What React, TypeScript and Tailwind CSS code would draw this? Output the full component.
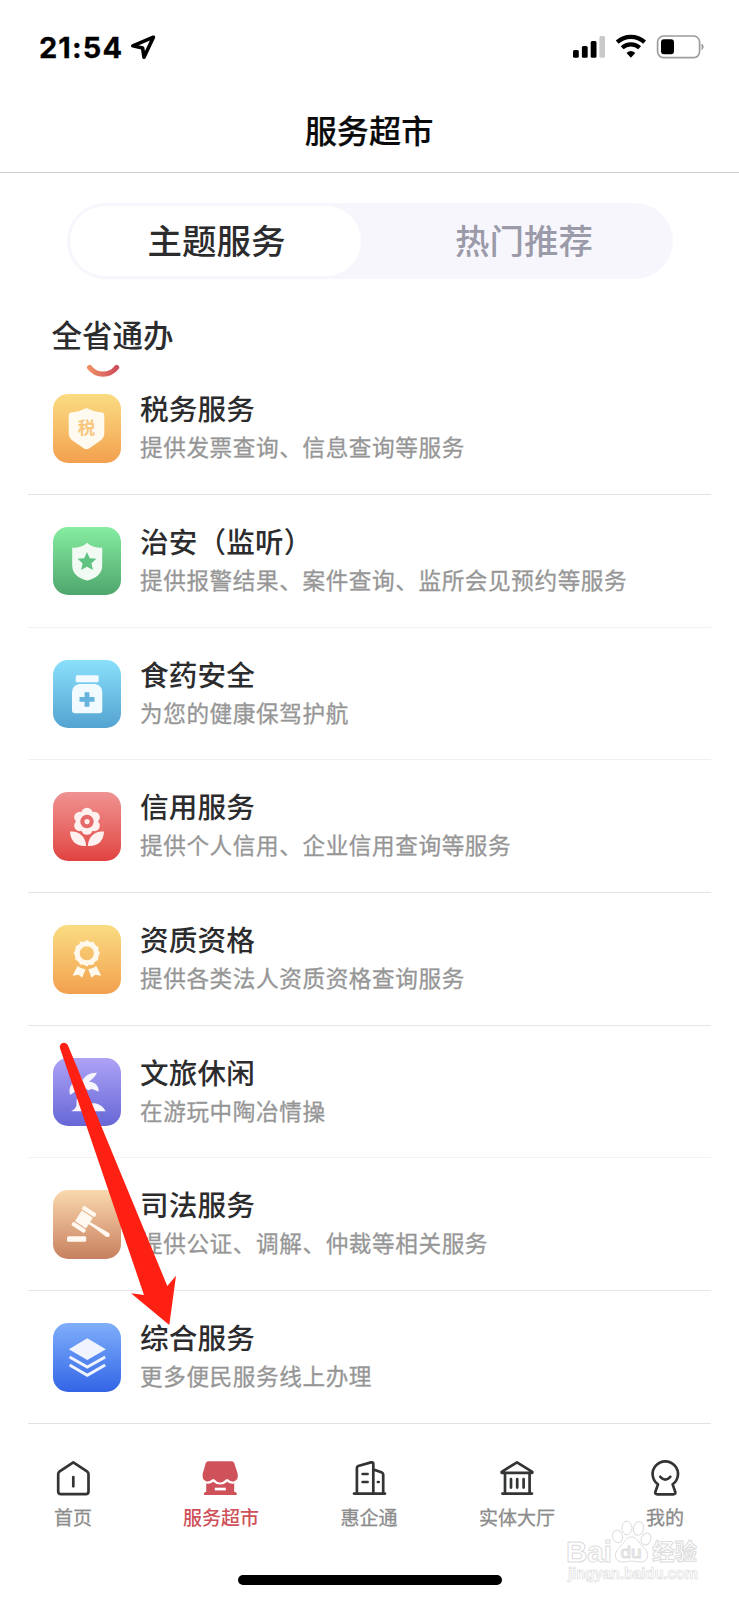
import type { ReactNode } from "react";

type Service = { title: string; desc: string; tile: string; line: string; icon: ReactNode };

const TaxIcon = () => (
  <svg viewBox="0 0 68 68" className="size-full">
    <path d="M33.5 13.7 Q42 17.8 49.3 18.2 Q51.3 18.6 51.3 21 V39 Q51.3 43.5 47.5 46.2 L36 54.2 Q33.5 55.8 31 54.2 L19.5 46.2 Q15.7 43.5 15.7 39 V21 Q15.7 18.6 17.7 18.2 Q25 17.8 33.5 13.7Z" fill="#fffaf0" />
    <text x="33.5" y="39.6" textAnchor="middle" fontSize="17.5" fontWeight="700" fill="#f8c67c" fontFamily="Noto Sans CJK SC, sans-serif">税</text>
  </svg>
);

const PoliceIcon = () => (
  <svg viewBox="0 0 68 68" className="size-full">
    <path d="M34.2 15.6 C31 19 25 21 19.2 20.2 V38 C19.2 47 26 51.5 34.2 53.2 C42.4 51.5 49.2 47 49.2 38 V20.2 C43.4 21 37.4 19 34.2 15.6Z" fill="#f1fbf4" />
    <path d="M34 24.8 L36.8 30.9 L43.4 31.6 L38.5 36.1 L39.9 42.7 L34 39.4 L28.1 42.7 L29.5 36.1 L24.6 31.6 L31.2 30.9Z" fill="#61c382" />
  </svg>
);

const MedicineIcon = () => (
  <svg viewBox="0 0 68 68" className="size-full">
    <rect x="22.7" y="15" width="23" height="7" rx="1.5" fill="#f1fafe" />
    <path d="M26 23.7 H42.3 Q49.3 25.5 49.3 32 V50 Q49.3 53 46.3 53 H22 Q19 53 19 50 V32 Q19 25.5 26 23.7Z" fill="#f1fafe" />
    <path d="M34 31.9 V46.5 M26.5 39.2 H41.5" stroke="#64b4dd" strokeWidth="4.8" fill="none" />
  </svg>
);

const FlowerIcon = () => (
  <svg viewBox="0 0 68 68" className="size-full">
    <g fill="#fff1f0">
      <circle cx="34" cy="29.3" r="11" />
      <circle cx="34" cy="21" r="5.6" />
      <circle cx="41.2" cy="25" r="5.6" />
      <circle cx="41.2" cy="33.4" r="5.6" />
      <circle cx="34" cy="37" r="5.6" />
      <circle cx="26.8" cy="33.4" r="5.6" />
      <circle cx="26.8" cy="25" r="5.6" />
      <path d="M17 39.3 C24 38.3 32.5 42.5 33.2 53.7 C23 54.3 17.5 49 17 39.3Z" />
      <path d="M51 39.3 C44 38.3 35.5 42.5 34.8 53.7 C45 54.3 50.5 49 51 39.3Z" />
    </g>
    <circle cx="34" cy="29.3" r="6.7" fill="#e66a69" />
    <circle cx="34" cy="29.3" r="2.6" fill="#fff1f0" />
  </svg>
);

const MedalIcon = () => (
  <svg viewBox="0 0 68 68" className="size-full">
    <g fill="none" stroke="#fff9ed">
      <circle cx="33.8" cy="28" r="9.6" strokeWidth="5" />
      <circle cx="33.8" cy="28" r="11.3" strokeWidth="3.4" strokeLinecap="round" strokeDasharray="0.1 5.816" />
    </g>
    <path d="M24.5 40.8 Q28 43.8 32.5 43.9 L29.2 52.4 L25.7 49.4 L19.6 50.6Z" fill="#fff9ed" />
    <path d="M43.3 40.8 Q39.8 43.8 35.3 43.9 L38.6 52.4 L42.1 49.4 L48.2 50.6Z" fill="#fff9ed" />
  </svg>
);

const PalmIcon = () => (
  <svg viewBox="0 0 68 68" className="size-full">
    <g fill="#f6f4fe">
      <path d="M18.3 53 Q22 51 23.4 48 C23.2 40 25 33 28.5 27 L34 27 C30.5 34 30.5 42 32.5 46.5 Q37 44.6 42 45 Q49.5 46.5 52.7 53Z" />
      <path d="M28 26 C30 18.5 36 14.2 43.9 14.6 C42.5 18.5 38.5 21.5 36 23.5 C41.5 23.5 46.2 27.5 45.6 33.2 C43 33 41.5 31 38.5 30.8 C37 31 36.5 32 35.5 32 C33.5 31 32.5 29.5 30 29.5Z" />
      <path d="M31 26 C30 19 25 15.8 18.5 17.5 C19 20 21.5 21.5 23 23 C18 25 15.5 30 17 36.4 C20 35.5 21.5 33 24.5 32 C27.5 31.5 30 29 31 26Z" />
    </g>
  </svg>
);

const GavelIcon = () => (
  <svg viewBox="0 0 68 68" className="size-full">
    <g fill="#fff8f1">
      <rect x="14" y="46" width="19.2" height="5.4" rx="1.5" />
      <g transform="translate(30.9 29.2) rotate(33)">
        <rect x="-7.8" y="-11.6" width="15.6" height="4.2" rx="1.6" />
        <rect x="-6.6" y="-6.3" width="13.2" height="12.6" rx="0.8" />
        <rect x="-7.8" y="7.4" width="15.6" height="4.2" rx="1.6" />
        <path d="M6 -1.3 L14 -1.5 L28 -2.4 Q30.5 -2 30.5 0 Q30.5 2 28 2.4 L14 1.5 L6 1.3Z" />
      </g>
    </g>
  </svg>
);

const LayersIcon = () => (
  <svg viewBox="0 0 68 68" className="size-full">
    <path d="M34.3 15 L52.9 25.9 L34.3 36.8 L15.9 25.9Z" fill="#eff4ff" />
    <path d="M16.6 33.8 L34.3 43.8 L52.2 33.8 M16.6 41.8 L34.3 52 L52.2 41.8" fill="none" stroke="#eff4ff" strokeWidth="2.9" />
  </svg>
);

const services: Service[] = [
  { title: "税务服务", desc: "提供发票查询、信息查询等服务", tile: "from-[#f9dc82] to-[#f2a04e]", line: "border-[#e2e2e2]", icon: <TaxIcon /> },
  { title: "治安（监听）", desc: "提供报警结果、案件查询、监所会见预约等服务", tile: "from-[#86eda1] to-[#4fa66d]", line: "border-[#f0f0f0]", icon: <PoliceIcon /> },
  { title: "食药安全", desc: "为您的健康保驾护航", tile: "from-[#8ae0fb] to-[#54a3d1]", line: "border-[#f0f0f0]", icon: <MedicineIcon /> },
  { title: "信用服务", desc: "提供个人信用、企业信用查询等服务", tile: "from-[#ef9292] to-[#e0413f]", line: "border-[#e2e2e2]", icon: <FlowerIcon /> },
  { title: "资质资格", desc: "提供各类法人资质资格查询服务", tile: "from-[#f9dc82] to-[#f2a04e]", line: "border-[#e6e6e6]", icon: <MedalIcon /> },
  { title: "文旅休闲", desc: "在游玩中陶冶情操", tile: "from-[#aea2f6] to-[#6767d6]", line: "border-[#f2f2f2]", icon: <PalmIcon /> },
  { title: "司法服务", desc: "提供公证、调解、仲裁等相关服务", tile: "from-[#f9d9ae] to-[#c7805f]", line: "border-[#e6e6e6]", icon: <GavelIcon /> },
  { title: "综合服务", desc: "更多便民服务线上办理", tile: "from-[#80aefa] to-[#3464e6]", line: "border-[#e2e2e2]", icon: <LayersIcon /> },
];

const navStroke = { fill: "none", stroke: "#333436", strokeWidth: 2.7, strokeLinecap: "round", strokeLinejoin: "round" } as const;

const tabs = [
  {
    label: "首页",
    icon: (
      <g {...navStroke}>
        <path d="M18.3 2.3 L32 11.3 Q33.5 12.4 33.5 14 V31.5 Q33.5 34.2 30.8 34.2 H5.9 Q3.2 34.2 3.2 31.5 V14 Q3.2 12.4 4.7 11.3Z" />
        <path d="M18.3 17 V26.3" />
      </g>
    ),
  },
  {
    label: "服务超市",
    active: true,
    icon: (
      <g fill="#cf515a">
        <path d="M5.4 1.2 H28.6 Q30.6 1.2 31.3 3.2 L34.6 13.5 Q36 19.8 30.8 21.4 Q27.8 22 25.6 19.8 Q24.3 18.4 23 19.6 Q20.5 22.4 17.2 22.4 Q13.9 22.4 11.4 19.6 Q10.1 18.4 8.8 19.8 Q6.6 22 3.6 21.4 Q-1.6 19.8 -0.2 13.5 L2.7 3.2 Q3.4 1.2 5.4 1.2Z" />
        <path d="M3.2 23.6 Q7.5 24.3 10.1 21.8 Q13 24.6 17.2 24.6 Q21.4 24.6 24.3 21.8 Q27 24.3 31.2 23.6 V32 H32.5 Q33.8 32.2 33.8 35 H0.9 Q0.9 32.2 2.2 32 H3.2Z" />
        <rect x="11.8" y="27.7" width="11" height="2.7" fill="#fff" />
      </g>
    ),
  },
  {
    label: "惠企通",
    icon: (
      <g {...navStroke}>
        <path d="M3 33.6 H34 M5.9 33.5 V7.8 Q5.9 6.5 7.2 6 L20 2.4 Q22.3 1.8 22.3 3.6 V33.5 M22.5 9.6 L31 12.6 Q32.2 13.2 32.2 14.5 V33.5 M11.6 14 H16.6 M11.6 22 H16.6 M26.9 22 H27.7" />
      </g>
    ),
  },
  {
    label: "实体大厅",
    icon: (
      <g {...navStroke}>
        <path d="M18 2.4 L33.3 11.8 V12.8 H2.7 V11.8Z M6 13 V33.4 M30.6 13 V33.4 M3.4 33.6 H33" />
        <path d="M12 19.2 V27.6 M18.2 19.2 V27.6 M24.6 19.2 V27.6" />
      </g>
    ),
  },
  {
    label: "我的",
    icon: (
      <g {...navStroke}>
        <path d="M11 24.4 A12.7 12.7 0 1 1 25.6 24.4 L28.3 32 Q28.8 34.3 26.3 34.3 H10.3 Q7.8 34.3 8.3 32Z" />
        <path d="M13.3 16.8 Q18.3 22.4 23.3 16.8" />
      </g>
    ),
  },
];

function StatusBar() {
  return (
    <div className="flex h-[94px] items-center justify-between pl-[39px] pr-[34px]">
      <div className="flex items-center gap-[8px]">
        <span className="w-[83px] whitespace-nowrap font-['Inter',sans-serif] text-[29px] font-bold leading-none tracking-[1.1px] text-black [-webkit-text-stroke:0.3px_#000]">21:54</span>
        <svg viewBox="0 0 26 26" className="size-[26px]">
          <path d="M23.4 3.2 L2.8 11.8 L12.6 13.9 L14 23.2Z" fill="none" stroke="#000" strokeWidth="3.6" strokeLinejoin="round" />
        </svg>
      </div>
      <svg viewBox="0 0 132 26" className="h-[26px] w-[132px]">
        <rect x="0" y="16" width="5.8" height="7.7" rx="1.5" />
        <rect x="8.9" y="12" width="5.8" height="11.7" rx="1.5" />
        <rect x="17.7" y="7" width="5.8" height="16.7" rx="1.5" />
        <rect x="26.4" y="2" width="5.6" height="21.7" rx="1.5" fill="#c9c9c9" />
        <g fill="none" stroke="#000" strokeWidth="4.2">
          <path d="M44.2 8.1 A20.5 20.5 0 0 1 71.6 8.1" />
          <path d="M49.2 13.8 A12.8 12.8 0 0 1 66.6 13.8" />
        </g>
        <path d="M57.9 23.8 L53.5 19 Q57.9 15.2 62.3 19Z" />
        <rect x="84.6" y="2" width="42" height="21.6" rx="6" fill="none" stroke="#9c9c9c" strokeWidth="1.7" />
        <rect x="88" y="5.3" width="13" height="15" rx="3" />
        <path d="M129 10 Q131.6 12.8 129 15.6Z" fill="#9c9c9c" stroke="#9c9c9c" />
      </svg>
    </div>
  );
}

function ServiceRow({ title, desc, tile, line, icon }: Service) {
  return (
    <li className={`flex h-[132.7px] border-b pl-[25px] pt-[32px] ${line}`}>
      <div className={`h-[68.5px] w-[68px] shrink-0 rounded-[15px] bg-linear-to-b ${tile}`}>{icon}</div>
      <div className="-mt-px ml-[19px] flex flex-col whitespace-nowrap">
        <h3 className="h-[34px] text-[28.6px] font-medium leading-[30px] tracking-[0.15px] text-[#2c2c2e]">{title}</h3>
        <p className="mt-[2px] text-[22.6px] leading-[36px] tracking-[0.61px] text-[#969696] [-webkit-text-stroke:0.3px_#969696]">{desc}</p>
      </div>
    </li>
  );
}

function Watermark() {
  return (
    <div className="absolute left-[560px] top-[1515px] h-[80px] w-[150px]">
      <svg viewBox="-6 -4 150 80" className="size-full overflow-visible" fontWeight="700" fill="#fff" stroke="#dcdcdc" strokeWidth="1">
        <text x="0" y="43" fontSize="30" textLength="46" lengthAdjust="spacingAndGlyphs" fontFamily="Liberation Sans, sans-serif">Bai</text>
        <ellipse cx="51.5" cy="17.5" rx="5" ry="6.3" transform="rotate(-15 51.5 17.5)" />
        <ellipse cx="61" cy="9" rx="5" ry="6.8" />
        <ellipse cx="72.5" cy="9.5" rx="5" ry="6.8" transform="rotate(12 72.5 9.5)" />
        <ellipse cx="80" cy="20" rx="4.8" ry="6.2" transform="rotate(20 80 20)" />
        <path d="M65.5 18 C71 18 73 24 77 28 C84 34 83 43 74 43 C70 43 68 42 65.5 42 C63 42 61 43 57 43 C48 43 47 34 54 28 C58 24 60 18 65.5 18Z" />
        <text x="54.5" y="38.5" fontSize="17" fontWeight="400" textLength="21" lengthAdjust="spacingAndGlyphs" fontFamily="Liberation Sans, sans-serif">du</text>
        <text x="86" y="41" fontSize="22.5" fontFamily="Noto Sans CJK SC, sans-serif">经验</text>
        <text x="2" y="60" fontSize="16" strokeWidth="0.7" textLength="130" lengthAdjust="spacingAndGlyphs" fontFamily="Liberation Sans, sans-serif">jingyan.baidu.com</text>
      </svg>
    </div>
  );
}

export default function App() {
  return (
    <div className="relative flex h-[1600px] w-[739px] flex-col overflow-hidden bg-white font-['Noto_Sans_CJK_SC',sans-serif]">
      <StatusBar />
      <header className="flex h-[79px] items-start justify-center border-b border-[#cfcfcf]">
        <h1 className="-mt-[3px] mr-[1px] text-[32.2px] font-medium leading-[76px] text-[#0a0a0a] [-webkit-text-stroke:0.2px_#0a0a0a]">服务超市</h1>
      </header>

      <div className="ml-[67px] mt-[29.5px] flex h-[76px] w-[606px] rounded-full bg-[#f7f6fc] p-[3px] text-[34.5px] font-medium leading-[67px]">
        <button className="h-[70px] w-[291px] shrink-0 rounded-full bg-white pb-[3px] pl-[2px] text-[#2c2c2e]">主题服务</button>
        <button className="ml-[9px] h-[70px] w-[300px] pb-[3px] pl-[8px] text-[#9a9aa8]">热门推荐</button>
      </div>

      <div className="ml-[51.5px] mt-[35.5px] h-[48.3px]">
        <h2 className="text-[30.5px] font-medium leading-[40px] text-[#2c2c2e]">全省通办</h2>
      </div>

      <svg viewBox="0 0 34 14" className="absolute left-[86px] top-[364px] h-[14px] w-[34px]">
        <defs>
          <linearGradient id="smile" x1="0" x2="1" y1="0" y2="0">
            <stop offset="0" stopColor="#ee8d63" />
            <stop offset="1" stopColor="#cf4f5c" />
          </linearGradient>
        </defs>
        <path d="M3.6 3.5 C7 8 12 10.2 17 10.2 C22 10.2 27 8 30.6 3.5" fill="none" stroke="url(#smile)" strokeWidth="5.2" strokeLinecap="round" />
      </svg>

      <ul className="ml-[28px] w-[683px]">
        {services.map((s) => (
          <ServiceRow key={s.title} {...s} />
        ))}
      </ul>

      <nav className="-ml-px mt-[36.1px] grid w-[740px] grid-cols-5">
        {tabs.map((t) => (
          <button key={t.label} className="flex flex-col items-center">
            <svg viewBox="0 0 36 36" className="size-[36px] overflow-visible">{t.icon}</svg>
            <span className={`mt-[6px] text-[19px] leading-[30px] ${t.active ? "font-medium text-[#cf515a]" : "text-[#8c8c8c] [-webkit-text-stroke:0.3px_#8c8c8c]"}`}>{t.label}</span>
          </button>
        ))}
      </nav>

      <div className="absolute left-[238px] top-[1575px] h-[10px] w-[264px] rounded-full bg-black" />

      <svg viewBox="0 0 130 290" className="absolute left-[55px] top-[1040px] h-[290px] w-[130px]">
        <path d="M5.1 8.5 A4.2 4.2 0 0 1 13 5.5 L112.3 246 L121 235.7 L114.3 285 L76 253.3 L89 255Z" fill="#fd2013" />
      </svg>

      <Watermark />
    </div>
  );
}
